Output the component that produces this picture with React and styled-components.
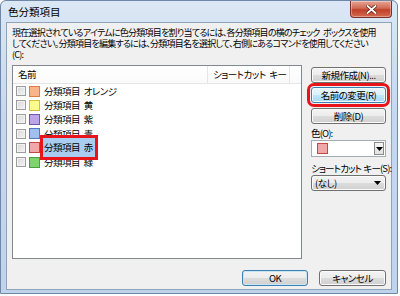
import React from "react";
import styled, { createGlobalStyle, css } from "styled-components";

const GlobalStyle = createGlobalStyle`
  body {
    margin: 0;
    background: #fff;
    font-family: "Noto Sans CJK JP", "Liberation Sans", sans-serif;
    font-feature-settings: "palt";
  }
`;

const Window = styled.div`
  width: 398px;
  height: 294px;
  box-sizing: border-box;
  border: 1px solid #6f88a6;
  border-radius: 6px 6px 0 0;
  background: linear-gradient(#dbe7f5, #c6d8ec 40%, #bfd3ea);
  padding: 0 5px 3px 5px;
  display: flex;
  flex-direction: column;
`;

const TitleBar = styled.div`
  height: 21px;
  display: flex;
  justify-content: space-between;
  align-items: flex-start;
`;

const Title = styled.div`
  font-size: 10.5px;
  line-height: 12px;
  margin: 5px 0 0 2px;
  color: #000;
`;

const CloseButton = styled.div`
  width: 42px;
  height: 17px;
  box-sizing: border-box;
  border: 1px solid #7a3026;
  border-top: none;
  border-radius: 0 0 4px 4px;
  background: linear-gradient(#e8a595, #d06a55 45%, #c0402a 55%, #d46a4f);
  display: flex;
  align-items: center;
  justify-content: center;
  box-shadow: inset 0 0 0 1px rgba(255, 255, 255, 0.35);
`;

const Client = styled.div`
  flex: 1;
  background: #f0f0f0;
  border: 1px solid #8fa3ba;
  padding: 4px 4px 3px 5px;
  display: flex;
  flex-direction: column;
  font-size: 9.5px;
  letter-spacing: -0.5px;
  word-spacing: 2px;
  color: #000;
`;

const Description = styled.div`
  font-size: 9px;
  letter-spacing: -0.75px;
  word-spacing: 2px;
  line-height: 11px;
  white-space: nowrap;
  margin-bottom: 5px;
`;

const Main = styled.div`
  display: flex;
  gap: 9px;
`;

const List = styled.div`
  width: 290px;
  height: 194px;
  box-sizing: border-box;
  border: 1px solid #828790;
  background: #fff;
`;

const Header = styled.div`
  height: 17px;
  display: flex;
  border-bottom: 1px solid #e5e5e5;
  background: linear-gradient(#fff, #fafafa);
`;

const HeaderCell = styled.div`
  width: ${(p) => p.w}px;
  box-sizing: border-box;
  padding-left: 5px;
  line-height: 17px;
  white-space: nowrap;
  overflow: hidden;
  border-right: ${(p) => (p.last ? "none" : "1px solid #e5e5e5")};
`;

const Row = styled.div`
  height: 14.2px;
  display: flex;
  align-items: center;
  padding-left: 3px;
`;

const Check = styled.div`
  width: 10px;
  height: 10px;
  box-sizing: border-box;
  border: 1px solid #9c9c9c;
  background: linear-gradient(135deg, #d8d8d8, #f4f4f4);
  box-shadow: inset 0 0 0 1px #f2f2f2;
  margin-right: 3px;
`;

const Swatch = styled.div`
  width: 11px;
  height: 11px;
  box-sizing: border-box;
  border: 1px solid ${(p) => p.edge};
  background: ${(p) => p.fill};
`;

const Label = styled.span`
  margin-left: 3px;
  padding: 0 1px;
  line-height: 14px;
  white-space: nowrap;
  ${(p) =>
    p.selected &&
    css`
      position: relative;
      z-index: 1;
      padding: 2px 2px 3px 1px;
      background: #a9cdf1;
      outline: 3px solid #e8141a;
    `}
`;

const Side = styled.div`
  width: 75px;
  padding-top: 2px;
  display: flex;
  flex-direction: column;
`;

const Button = styled.div`
  height: 16px;
  width: ${(p) => p.w || "auto"};
  box-sizing: border-box;
  border: 1px solid ${(p) => (p.def ? "#3c7fb1" : "#707070")};
  border-radius: 3px;
  background: linear-gradient(#f3f3f3, #ececec 50%, #dddddd 50%, #cfcfcf);
  box-shadow: inset 0 0 0 1px ${(p) => (p.def ? "#c8e6f8" : "#fbfbfb")};
  display: flex;
  align-items: center;
  justify-content: center;
  line-height: 14px;
  margin-bottom: ${(p) => p.mb || 0}px;
  white-space: nowrap;
  ${(p) =>
    p.hot &&
    css`
      border-color: #3c7fb1;
      background: linear-gradient(#eaf6fd, #d9f0fc 50%, #bee6fd 50%, #a7d9f5);
      box-shadow: inset 0 0 0 1px #f4fbff;
      outline: 3px solid #e8141a;
      outline-offset: 1px;
      position: relative;
      z-index: 1;
    `}
`;

const FieldLabel = styled.div`
  line-height: 12px;
  margin: 2px 0 1px 0;
  white-space: nowrap;
  letter-spacing: -0.85px;
  word-spacing: 1px;
`;

const ColorCombo = styled.div`
  height: 17px;
  box-sizing: border-box;
  border: 1px solid #a5acb5;
  background: #fff;
  display: flex;
  align-items: center;
  justify-content: space-between;
  padding: 0 1px 0 5px;
  margin-bottom: 3px;
`;

const ComboArrowBox = styled.div`
  width: 10px;
  height: 13px;
  box-sizing: border-box;
  border: 1px solid #8a8a8a;
  background: linear-gradient(#f6f6f6, #e0e0e0);
  display: flex;
  align-items: center;
  justify-content: center;
`;

const DropButton = styled(Button)`
  justify-content: space-between;
  padding: 0 4px 0 3px;
`;

const Footer = styled.div`
  margin-top: auto;
  display: flex;
  justify-content: flex-end;
  gap: 11px;
  padding-right: 1px;
`;

const Arrow = () => (
  <svg width="7" height="4" viewBox="0 0 7 4">
    <path d="M0 0h7L3.5 4z" fill="#000" />
  </svg>
);

const items = [
  { name: "オレンジ", fill: "#f8b58c", edge: "#e07c40" },
  { name: "黄", fill: "#fcfc8c", edge: "#c9c040" },
  { name: "紫", fill: "#bba5e4", edge: "#7257b0" },
  { name: "青", fill: "#a2c0ec", edge: "#4f79c4" },
  { name: "赤", fill: "#f0a8a8", edge: "#c44848", selected: true },
  { name: "緑", fill: "#7fd46e", edge: "#4a9e3e" },
];

export default function App() {
  return (
    <>
      <GlobalStyle />
      <Window>
        <TitleBar>
          <Title>色分類項目</Title>
          <CloseButton>
            <svg width="11" height="9" viewBox="0 0 11 9">
              <path
                d="M1.5 1l8 7M9.5 1l-8 7"
                stroke="#5a1a10"
                strokeWidth="3.2"
                strokeLinecap="square"
              />
              <path
                d="M1.5 1l8 7M9.5 1l-8 7"
                stroke="#fff"
                strokeWidth="1.8"
                strokeLinecap="square"
              />
            </svg>
          </CloseButton>
        </TitleBar>
        <Client>
          <Description>
            現在選択されているアイテムに色分類項目を割り当てるには、各分類項目の横のチェック ボックスを使用
            <br />
            してください。分類項目を編集するには、分類項目名を選択して、右側にあるコマンドを使用してください
            <br />
            (C):
          </Description>
          <Main>
            <List>
              <Header>
                <HeaderCell w={195}>名前</HeaderCell>
                <HeaderCell w={82}>ショートカット キー</HeaderCell>
                <HeaderCell w={11} last />
              </Header>
              {items.map((it) => (
                <Row key={it.name}>
                  <Check />
                  <Swatch fill={it.fill} edge={it.edge} />
                  <Label selected={it.selected}>分類項目 {it.name}</Label>
                </Row>
              ))}
            </List>
            <Side>
              <Button mb={4}>新規作成(N)...</Button>
              <Button mb={5} hot>
                名前の変更(R)
              </Button>
              <Button mb={1}>削除(D)</Button>
              <FieldLabel>色(O):</FieldLabel>
              <ColorCombo>
                <Swatch fill="#f0a8a8" edge="#c44848" />
                <ComboArrowBox>
                  <Arrow />
                </ComboArrowBox>
              </ColorCombo>
              <FieldLabel>ショートカット キー(S):</FieldLabel>
              <DropButton>
                <span>(なし)</span>
                <Arrow />
              </DropButton>
            </Side>
          </Main>
          <Footer>
            <Button w="66px" def>
              OK
            </Button>
            <Button w="67px">キャンセル</Button>
          </Footer>
        </Client>
      </Window>
    </>
  );
}
